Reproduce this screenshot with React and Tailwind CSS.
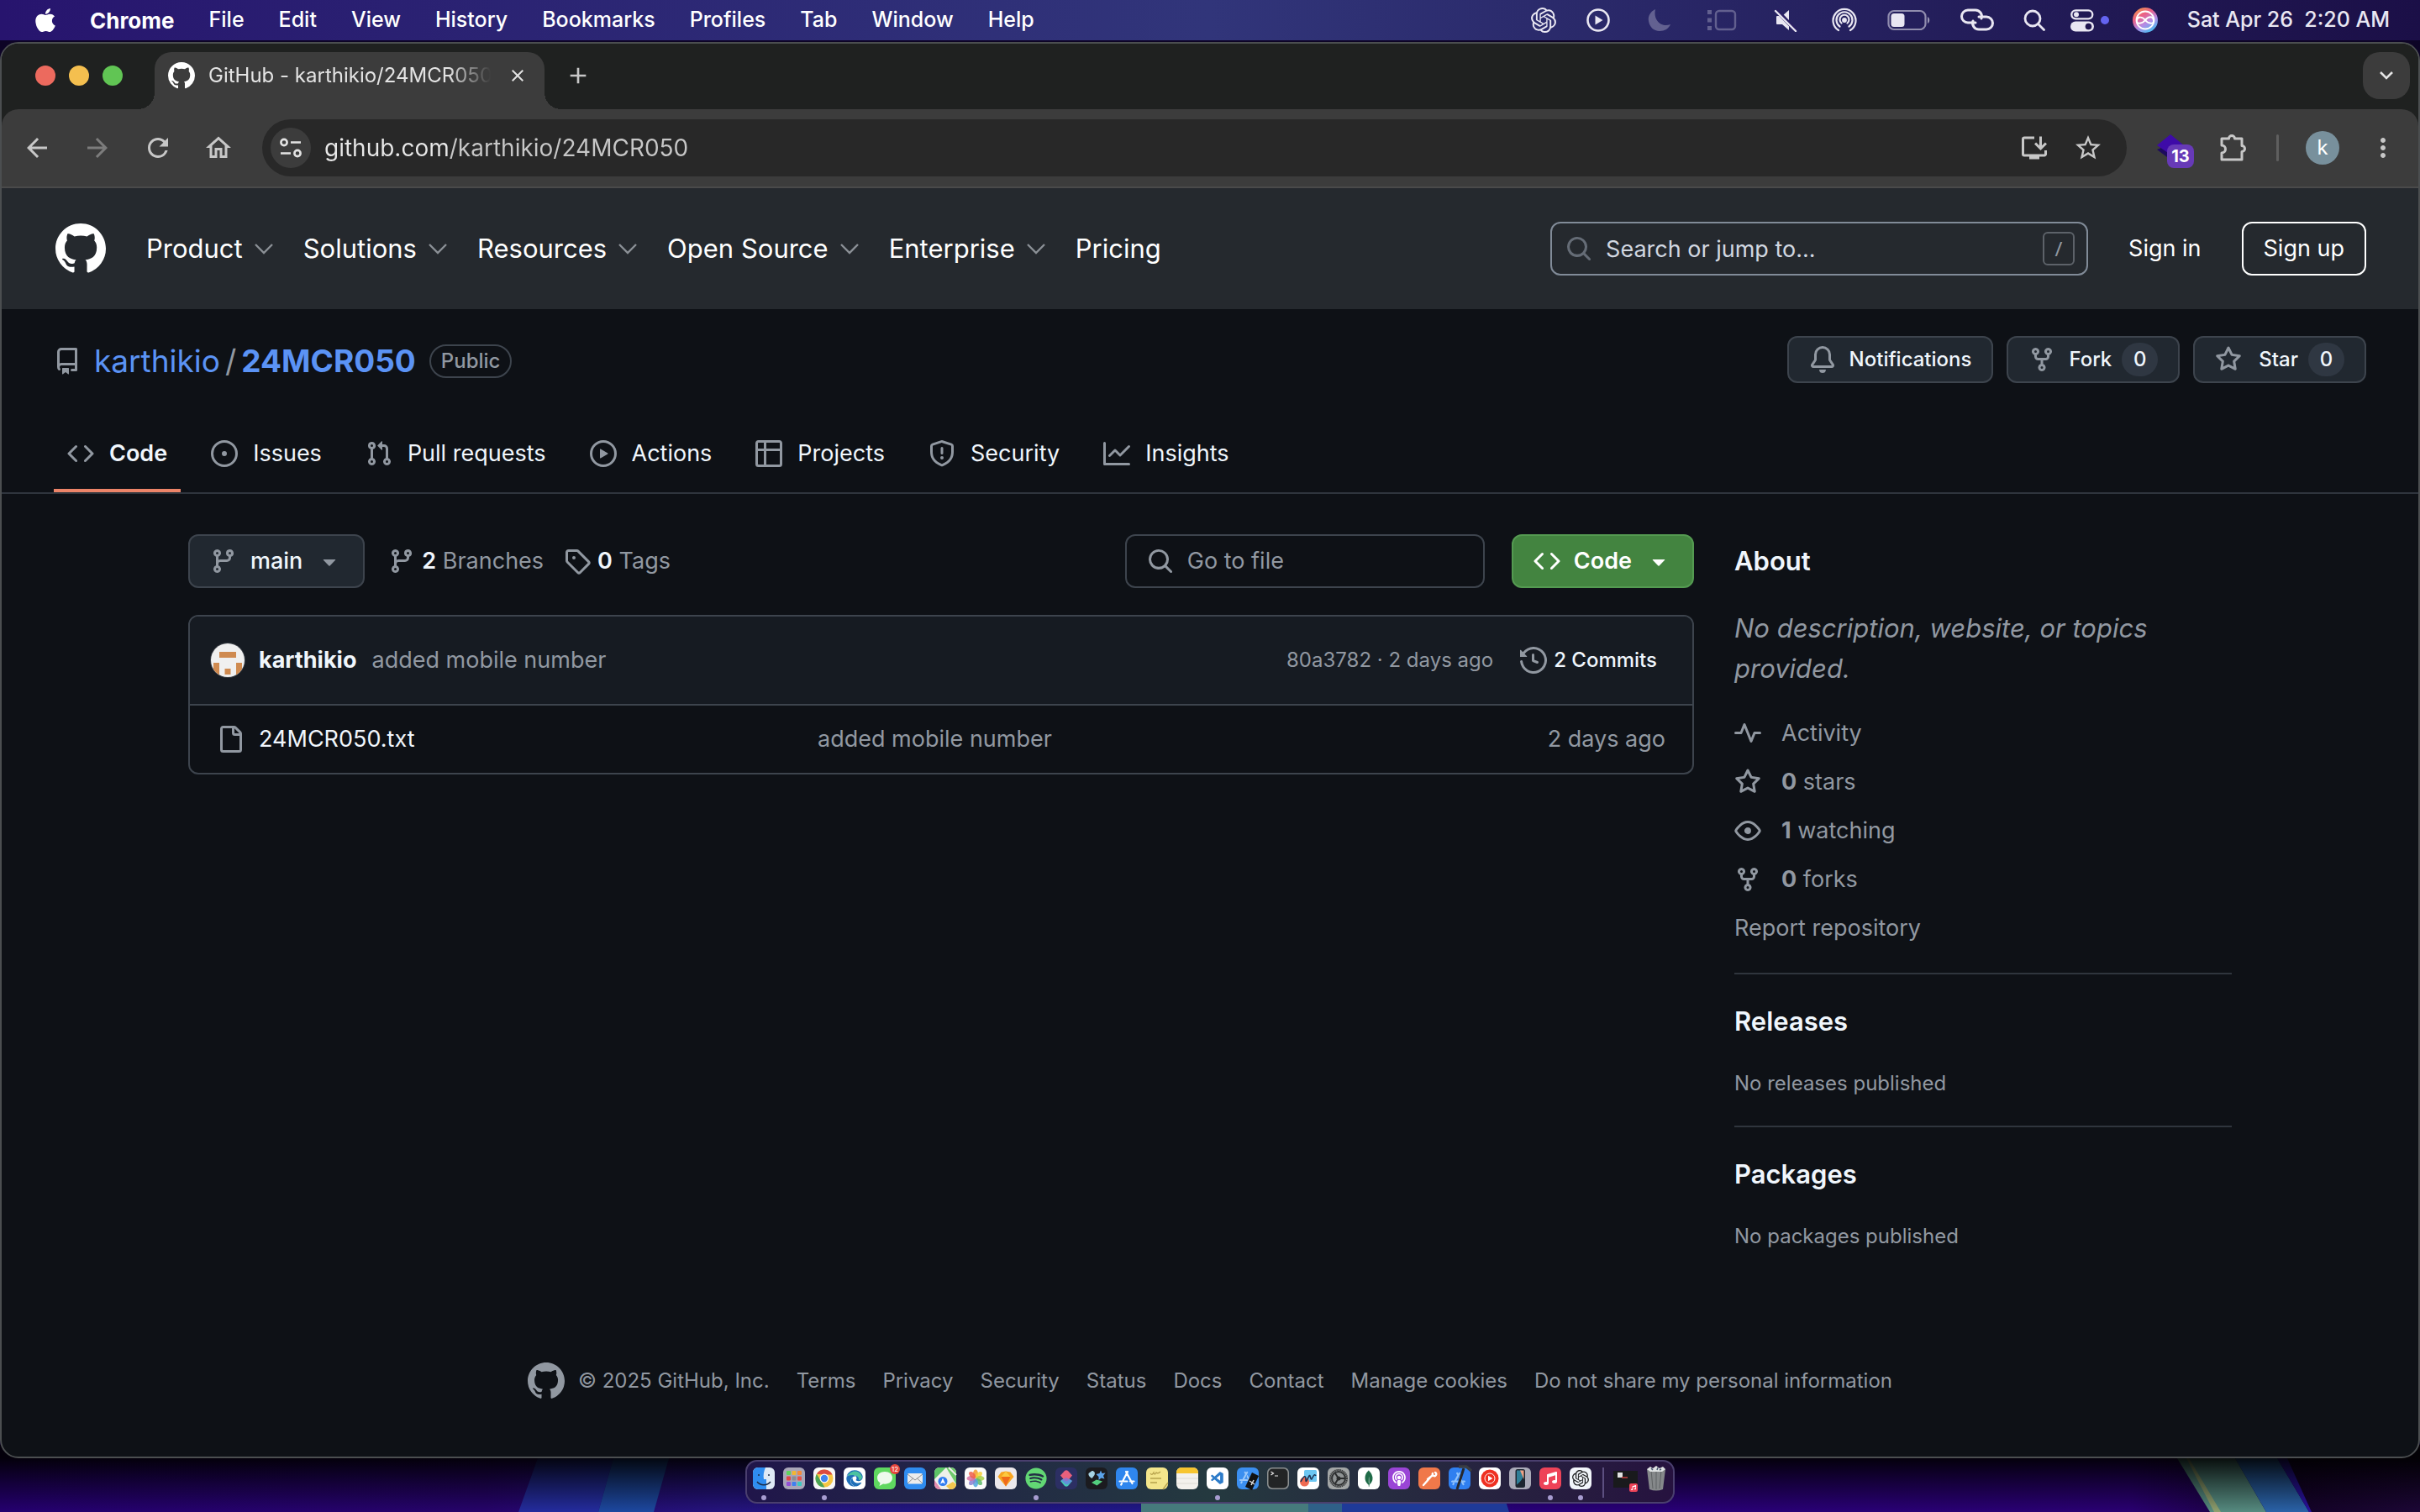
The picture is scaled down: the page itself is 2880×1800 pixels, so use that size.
import React from 'react';
import {
  FaApple,
  FaSpotify,
  FaEdge,
  FaMusic,
  FaPodcast,
} from 'react-icons/fa';
import {
  MdArrowBack,
  MdArrowForward,
  MdRefresh,
  MdOutlineHome,
  MdOutlineStarBorder,
  MdInstallDesktop,
  MdMoreVert,
  MdAdd,
  MdClose,
} from 'react-icons/md';
import { SiOpenai, SiMongodb, SiAppstore } from 'react-icons/si';
import { VscVscode } from 'react-icons/vsc';

const octicons = {
  mark: 'M8 0c4.42 0 8 3.58 8 8a8.013 8.013 0 0 1-5.45 7.59c-.4.08-.55-.17-.55-.38 0-.27.01-1.13.01-2.2 0-.75-.25-1.23-.54-1.48 1.78-.2 3.65-.88 3.65-3.95 0-.88-.31-1.59-.82-2.15.08-.2.36-1.02-.08-2.12 0 0-.67-.22-2.2.82-.64-.18-1.32-.27-2-.27-.68 0-1.36.09-2 .27-1.53-1.03-2.2-.82-2.2-.82-.44 1.1-.16 1.92-.08 2.12-.51.56-.82 1.28-.82 2.15 0 3.06 1.86 3.75 3.64 3.95-.23.2-.44.55-.51 1.07-.46.21-1.61.55-2.33-.66-.15-.24-.6-.83-1.23-.82-.67.01-.27.38.01.53.34.19.73.9.82 1.13.16.45.68 1.31 2.69.94 0 .67.01 1.3.01 1.49 0 .21-.15.45-.55.38A7.995 7.995 0 0 1 0 8c0-4.42 3.58-8 8-8Z',
  code: 'm11.28 3.22 4.25 4.25a.75.75 0 0 1 0 1.06l-4.25 4.25a.749.749 0 0 1-1.275-.326.749.749 0 0 1 .215-.734L13.94 8l-3.72-3.72a.749.749 0 0 1 .326-1.275.749.749 0 0 1 .734.215Zm-6.56 0a.751.751 0 0 1 1.042.018.751.751 0 0 1 .018 1.042L2.06 8l3.72 3.72a.749.749 0 0 1-.326 1.275.749.749 0 0 1-.734-.215L.47 8.53a.75.75 0 0 1 0-1.06Z',
  issue: 'M8 9.5a1.5 1.5 0 1 0 0-3 1.5 1.5 0 0 0 0 3ZM8 0a8 8 0 1 1 0 16A8 8 0 0 1 8 0ZM1.5 8a6.5 6.5 0 1 0 13 0 6.5 6.5 0 0 0-13 0Z',
  pull: 'M1.5 3.25a2.25 2.25 0 1 1 3 2.122v5.256a2.251 2.251 0 1 1-1.5 0V5.372A2.25 2.25 0 0 1 1.5 3.25Zm5.677-.177L9.573.677A.25.25 0 0 1 10 .854V2.5h1A2.5 2.5 0 0 1 13.5 5v5.628a2.251 2.251 0 1 1-1.5 0V5a1 1 0 0 0-1-1h-1v1.646a.25.25 0 0 1-.427.177L7.177 3.427a.25.25 0 0 1 0-.354ZM3.75 2.5a.75.75 0 1 0 0 1.5.75.75 0 0 0 0-1.5Zm0 9.5a.75.75 0 1 0 0 1.5.75.75 0 0 0 0-1.5Zm8.25.75a.75.75 0 1 0 1.5 0 .75.75 0 0 0-1.5 0Z',
  play: 'M8 0a8 8 0 1 1 0 16A8 8 0 0 1 8 0ZM1.5 8a6.5 6.5 0 1 0 13 0 6.5 6.5 0 0 0-13 0Zm4.879-2.773 4.264 2.559a.25.25 0 0 1 0 .428l-4.264 2.559A.25.25 0 0 1 6 10.559V5.442a.25.25 0 0 1 .379-.215Z',
  table: 'M0 1.75C0 .784.784 0 1.75 0h12.5C15.216 0 16 .784 16 1.75v12.5A1.75 1.75 0 0 1 14.25 16H1.75A1.75 1.75 0 0 1 0 14.25ZM6.5 6.5v8h7.75a.25.25 0 0 0 .25-.25V6.5Zm8-1.5V1.75a.25.25 0 0 0-.25-.25H6.5V5Zm-13 1.5v7.75c0 .138.112.25.25.25H5v-8ZM5 5V1.5H1.75a.25.25 0 0 0-.25.25V5Z',
  shield: 'M7.467.133a1.748 1.748 0 0 1 1.066 0l5.25 1.68A1.75 1.75 0 0 1 15 3.48V7c0 1.566-.32 3.182-1.303 4.682-.983 1.498-2.585 2.813-5.032 3.855a1.697 1.697 0 0 1-1.33 0c-2.447-1.042-4.049-2.357-5.032-3.855C1.32 10.182 1 8.566 1 7V3.48a1.75 1.75 0 0 1 1.217-1.667Zm.61 1.429a.25.25 0 0 0-.153 0l-5.25 1.68a.25.25 0 0 0-.174.238V7c0 1.358.275 2.666 1.057 3.86.784 1.194 2.121 2.34 4.366 3.297a.196.196 0 0 0 .154 0c2.245-.956 3.582-2.104 4.366-3.298C13.225 9.666 13.5 8.36 13.5 7V3.48a.251.251 0 0 0-.174-.237l-5.25-1.68ZM8.75 4.75v3a.75.75 0 0 1-1.5 0v-3a.75.75 0 0 1 1.5 0ZM9 10.5a1 1 0 1 1-2 0 1 1 0 0 1 2 0Z',
  graph: 'M1.5 1.75V13.5h13.75a.75.75 0 0 1 0 1.5H.75a.75.75 0 0 1-.75-.75V1.75a.75.75 0 0 1 1.5 0Zm14.28 2.53-5.25 5.25a.75.75 0 0 1-1.06 0L7 7.06 4.28 9.78a.751.751 0 0 1-1.042-.018.751.751 0 0 1-.018-1.042l3.25-3.25a.75.75 0 0 1 1.06 0L10 7.94l4.72-4.72a.751.751 0 0 1 1.042.018.751.751 0 0 1 .018 1.042Z',
  repo: 'M2 2.5A2.5 2.5 0 0 1 4.5 0h8.75a.75.75 0 0 1 .75.75v12.5a.75.75 0 0 1-.75.75h-2.5a.75.75 0 0 1 0-1.5h1.75v-2h-8a1 1 0 0 0-.714 1.7.75.75 0 1 1-1.072 1.05A2.495 2.495 0 0 1 2 11.5Zm10.5-1h-8a1 1 0 0 0-1 1v6.708A2.486 2.486 0 0 1 4.5 9h8ZM5 12.25a.25.25 0 0 1 .25-.25h3.5a.25.25 0 0 1 .25.25v3.25a.25.25 0 0 1-.4.2l-1.45-1.087a.249.249 0 0 0-.3 0L5.4 15.7a.25.25 0 0 1-.4-.2Z',
  bell: 'M8 16a2 2 0 0 0 1.985-1.75c.017-.137-.097-.25-.235-.25h-3.5c-.138 0-.252.113-.235.25A2 2 0 0 0 8 16ZM3 5a5 5 0 0 1 10 0v2.947c0 .05.015.098.042.139l1.703 2.555A1.519 1.519 0 0 1 13.482 13H2.518a1.516 1.516 0 0 1-1.263-2.36l1.703-2.554A.255.255 0 0 0 3 7.947Zm5-3.5A3.5 3.5 0 0 0 4.5 5v2.947c0 .346-.102.683-.294.97l-1.703 2.556a.017.017 0 0 0-.003.01l.001.006c0 .002.002.004.004.006l.006.004.007.001h10.964l.007-.001.006-.004.004-.006.001-.007a.017.017 0 0 0-.003-.01l-1.703-2.554a1.745 1.745 0 0 1-.294-.97V5A3.5 3.5 0 0 0 8 1.5Z',
  fork: 'M5 5.372v.878c0 .414.336.75.75.75h4.5a.75.75 0 0 0 .75-.75v-.878a2.25 2.25 0 1 1 1.5 0v.878a2.25 2.25 0 0 1-2.25 2.25h-1.5v2.128a2.251 2.251 0 1 1-1.5 0V8.5h-1.5A2.25 2.25 0 0 1 3.5 6.25v-.878a2.25 2.25 0 1 1 1.5 0ZM5 3.25a.75.75 0 1 0-1.5 0 .75.75 0 0 0 1.5 0Zm6.75.75a.75.75 0 1 0 0-1.5.75.75 0 0 0 0 1.5Zm-3 8.75a.75.75 0 1 0-1.5 0 .75.75 0 0 0 1.5 0Z',
  star: 'M8 .25a.75.75 0 0 1 .673.418l1.882 3.815 4.21.612a.75.75 0 0 1 .416 1.279l-3.046 2.97.719 4.192a.751.751 0 0 1-1.088.791L8 12.347l-3.766 1.98a.75.75 0 0 1-1.088-.79l.72-4.194L.818 6.374a.75.75 0 0 1 .416-1.28l4.21-.611L7.327.668A.75.75 0 0 1 8 .25Zm0 2.445L6.615 5.5a.75.75 0 0 1-.564.41l-3.097.45 2.24 2.184a.75.75 0 0 1 .216.664l-.528 3.084 2.769-1.456a.75.75 0 0 1 .698 0l2.77 1.456-.53-3.084a.75.75 0 0 1 .216-.664l2.24-2.183-3.096-.45a.75.75 0 0 1-.564-.41L8 2.694Z',
  branch: 'M9.5 3.25a2.25 2.25 0 1 1 3 2.122V6A2.5 2.5 0 0 1 10 8.5H6a1 1 0 0 0-1 1v1.128a2.251 2.251 0 1 1-1.5 0V5.372a2.25 2.25 0 1 1 1.5 0v1.836A2.493 2.493 0 0 1 6 7h4a1 1 0 0 0 1-1v-.628A2.25 2.25 0 0 1 9.5 3.25Zm-6 0a.75.75 0 1 0 1.5 0 .75.75 0 0 0-1.5 0Zm8.25-.75a.75.75 0 1 0 0 1.5.75.75 0 0 0 0-1.5ZM4.25 12a.75.75 0 1 0 0 1.5.75.75 0 0 0 0-1.5Z',
  tag: 'M1 7.775V2.75C1 1.784 1.784 1 2.75 1h5.025c.464 0 .91.184 1.238.513l6.25 6.25a1.75 1.75 0 0 1 0 2.474l-5.026 5.026a1.75 1.75 0 0 1-2.474 0l-6.25-6.25A1.752 1.752 0 0 1 1 7.775Zm1.5 0c0 .066.026.13.073.177l6.25 6.25a.25.25 0 0 0 .354 0l5.025-5.025a.25.25 0 0 0 0-.354l-6.25-6.25a.25.25 0 0 0-.177-.073H2.75a.25.25 0 0 0-.25.25ZM6 5a1 1 0 1 1 0 2 1 1 0 0 1 0-2Z',
  search: 'M10.68 11.74a6 6 0 0 1-7.922-8.982 6 6 0 0 1 8.982 7.922l3.04 3.04a.749.749 0 0 1-.326 1.275.749.749 0 0 1-.734-.215ZM11.5 7a4.499 4.499 0 1 0-8.997 0A4.499 4.499 0 0 0 11.5 7Z',
  history: 'm.427 1.927 1.215 1.215a8.002 8.002 0 1 1-1.6 5.685.75.75 0 1 1 1.493-.154 6.5 6.5 0 1 0 1.18-4.458l1.358 1.358A.25.25 0 0 1 3.896 6H.25A.25.25 0 0 1 0 5.75V2.104a.25.25 0 0 1 .427-.177ZM7.75 4a.75.75 0 0 1 .75.75v2.992l2.028.812a.75.75 0 0 1-.557 1.392l-2.5-1A.751.751 0 0 1 7 8.25v-3.5A.75.75 0 0 1 7.75 4Z',
  file: 'M2 1.75C2 .784 2.784 0 3.75 0h6.586c.464 0 .909.184 1.237.513l2.914 2.914c.329.328.513.773.513 1.237v9.586A1.75 1.75 0 0 1 13.25 16h-9.5A1.75 1.75 0 0 1 2 14.25Zm1.75-.25a.25.25 0 0 0-.25.25v12.5c0 .138.112.25.25.25h9.5a.25.25 0 0 0 .25-.25V6h-2.75A1.75 1.75 0 0 1 9 4.25V1.5Zm6.75.062V4.25c0 .138.112.25.25.25h2.688l-.011-.013-2.914-2.914-.013-.011Z',
  pulse: 'M6 2c.306 0 .582.187.696.471L10 10.731l1.304-3.26A.751.751 0 0 1 12 7h3.25a.75.75 0 0 1 0 1.5h-2.742l-1.812 4.528a.751.751 0 0 1-1.392 0L6 4.77 4.696 8.03A.75.75 0 0 1 4 8.5H.75a.75.75 0 0 1 0-1.5h2.742l1.812-4.529A.751.751 0 0 1 6 2Z',
  eye: 'M8 2c1.981 0 3.671.992 4.933 2.078 1.27 1.091 2.187 2.345 2.637 3.023a1.62 1.62 0 0 1 0 1.798c-.45.678-1.367 1.932-2.637 3.023C11.67 13.008 9.981 14 8 14c-1.981 0-3.671-.992-4.933-2.078C1.797 10.83.88 9.576.43 8.898a1.62 1.62 0 0 1 0-1.798c.45-.677 1.367-1.931 2.637-3.022C4.33 2.992 6.019 2 8 2ZM1.679 7.932a.12.12 0 0 0 0 .136c.411.622 1.241 1.75 2.366 2.717C5.176 11.758 6.527 12.5 8 12.5c1.473 0 2.825-.742 3.955-1.715 1.124-.967 1.954-2.096 2.366-2.717a.12.12 0 0 0 0-.136c-.412-.621-1.242-1.75-2.366-2.717C10.824 4.242 9.473 3.5 8 3.5c-1.473 0-2.825.742-3.955 1.715-1.124.967-1.954 2.096-2.366 2.717ZM8 10a2 2 0 1 1-.001-3.999A2 2 0 0 1 8 10Z',
  caret: 'm4.427 7.427 3.396 3.396a.25.25 0 0 0 .354 0l3.396-3.396A.25.25 0 0 0 11.396 7H4.604a.25.25 0 0 0-.177.427Z',
};

const Octicon = ({ name, className = 'size-8 text-[#9198a1]' }) => (
  <svg viewBox="0 0 16 16" fill="currentColor" className={`shrink-0 ${className}`} aria-hidden="true">
    <path d={octicons[name]} />
  </svg>
);

const Wallpaper = () => (
  <svg
    className="absolute inset-x-0 bottom-0 h-20 w-full"
    viewBox="0 0 2880 80"
    preserveAspectRatio="none"
    aria-hidden="true"
  >
    <defs>
      <linearGradient id="wall" x1="0" x2="1" y1="0" y2="0">
        <stop offset="0" stopColor="#250070" />
        <stop offset="0.2" stopColor="#26036b" />
        <stop offset="0.3" stopColor="#25147f" />
        <stop offset="0.47" stopColor="#21188a" />
        <stop offset="0.63" stopColor="#29007a" />
        <stop offset="0.88" stopColor="#2a0073" />
        <stop offset="0.95" stopColor="#140228" />
        <stop offset="1" stopColor="#1c0636" />
      </linearGradient>
      <linearGradient id="shade" x1="0" x2="0" y1="0" y2="1">
        <stop offset="0.2" stopColor="#000" stopOpacity="0.9" />
        <stop offset="0.6" stopColor="#000" stopOpacity="0.45" />
        <stop offset="1" stopColor="#000" stopOpacity="0" />
      </linearGradient>
    </defs>
    <rect width="2880" height="80" fill="url(#wall)" />
    <path d="M640 16h90l-18 64h-95z" fill="#242c9e" />
    <path d="M730 16h66l-18 64h-66z" fill="#1d48a0" />
    <path d="M2591 16h69l37 64h-67z" fill="#568b80" />
    <path d="M2602 16h3l38 64h-8z" fill="#8fa06f" />
    <path d="M2660 16h50l38 64h-51z" fill="#2a62a8" />
    <path d="M2710 16h12l29 64h-3z" fill="#2a12a0" />
    <rect width="2880" height="80" fill="url(#shade)" />
    <rect x="1358" y="64" width="199" height="16" fill="#467a7c" />
    <rect x="1557" y="64" width="40" height="16" fill="#2f6088" />
    <path d="M1597 64h194l5 16h-199z" fill="#1f3a98" />
  </svg>
);

/* ---------- macOS menu bar ---------- */

const menus = ['File', 'Edit', 'View', 'History', 'Bookmarks', 'Profiles', 'Tab', 'Window', 'Help'];

const StatusIcon = ({ label, width, children }) => (
  <button type="button" aria-label={label} className={`flex items-center justify-center ${width}`}>
    {children}
  </button>
);

const MenuBar = () => (
  <header className="relative flex h-12 items-center justify-between bg-linear-to-r from-[#27146e] via-[#31357a] to-[#1b0f47] pr-9 pl-[38px] text-[25px] text-white">
    <nav className="flex items-center gap-[41px] font-medium" aria-label="Menu bar">
      <button type="button" aria-label="Apple" className="-mr-1">
        <FaApple className="size-8" />
      </button>
      <button type="button" className="text-[26px] font-bold">Chrome</button>
      {menus.map((m) => (
        <button type="button" key={m}>{m}</button>
      ))}
    </nav>
    <div className="flex items-center gap-4 text-[#e9e7f2]">
      <StatusIcon label="ChatGPT" width="w-[44px]">
        <SiOpenai className="size-[30px]" />
      </StatusIcon>
      <StatusIcon label="Now playing" width="w-[54px]">
        <svg viewBox="0 0 28 28" className="size-7">
          <circle cx="14" cy="14" r="12.5" fill="none" stroke="currentColor" strokeWidth="2.6" />
          <path d="M10.5 8.5v11l9-5.5z" fill="currentColor" />
        </svg>
      </StatusIcon>
      <StatusIcon label="Focus" width="w-[60px]">
        <svg viewBox="0 0 28 28" className="size-7 opacity-30">
          <path d="M9 1C3 4 0 9 1 15c1 7 6 12 13 12 6 0 11-3 13-8C17 23 6 15 9 1z" fill="currentColor" />
        </svg>
      </StatusIcon>
      <StatusIcon label="Stage Manager" width="w-[56px]">
        <svg viewBox="0 0 36 26" className="h-[26px] w-9 opacity-30">
          <rect x="11" y="2" width="23" height="22" rx="4" fill="none" stroke="currentColor" strokeWidth="2.4" />
          <path d="M1 1h5v5H1zM1 10.5h5v5H1zM1 20h5v5H1z" fill="currentColor" />
        </svg>
      </StatusIcon>
      <StatusIcon label="Muted" width="w-[64px]">
        <svg viewBox="0 0 28 28" className="size-7">
          <path d="M18 2v24l-8-7H4a1 1 0 0 1-1-1v-8a1 1 0 0 1 1-1h6z" fill="currentColor" />
          <path d="M3 2l24 25" stroke="#2a1f63" strokeWidth="5" />
          <path d="M2 3l24 24" stroke="currentColor" strokeWidth="2.4" strokeLinecap="round" />
        </svg>
      </StatusIcon>
      <StatusIcon label="AirDrop" width="w-[44px]">
        <svg viewBox="0 0 30 30" className="size-[30px]" fill="none" stroke="currentColor" strokeWidth="2.2" strokeLinecap="round">
          <path d="M8 27A13.5 13.5 0 1 1 22 27" />
          <path d="M9.5 22.5A9.5 9.5 0 1 1 20.5 22.5" />
          <path d="M11.5 18.5A5.5 5.5 0 1 1 18.5 18.5" />
          <circle cx="15" cy="15" r="1.8" fill="currentColor" />
        </svg>
      </StatusIcon>
      <StatusIcon label="Battery" width="w-[78px]">
        <svg viewBox="0 0 52 26" className="h-[26px] w-[52px]">
          <rect x="1.5" y="2" width="44" height="22" rx="6.5" fill="none" stroke="currentColor" strokeOpacity="0.55" strokeWidth="2.2" />
          <rect x="4.5" y="5" width="16" height="16" rx="3.5" fill="currentColor" />
          <path d="M48 9c3 1.500 3 6.500 0 8z" fill="currentColor" fillOpacity="0.6" />
        </svg>
      </StatusIcon>
      <StatusIcon label="Hotspot" width="w-[52px]">
        <svg viewBox="0 0 44 28" className="h-7 w-11" fill="none" stroke="currentColor" strokeWidth="3" strokeLinecap="round">
          <path d="M20 17h-9a7.5 7.5 0 0 1 0-15h9a7.5 7.5 0 0 1 7 10" />
          <path d="M24 10h9a7.5 7.5 0 0 1 0 15h-9a7.5 7.5 0 0 1-7-10" />
        </svg>
      </StatusIcon>
      <StatusIcon label="Spotlight" width="w-[52px]">
        <svg viewBox="0 0 26 26" className="size-[26px]" fill="none" stroke="currentColor" strokeWidth="2.8" strokeLinecap="round">
          <circle cx="11" cy="11" r="9" />
          <path d="M18 18l6.5 6.5" />
        </svg>
      </StatusIcon>
      <StatusIcon label="Control Centre" width="w-[48px]">
        <svg viewBox="0 0 48 28" className="h-7 w-12">
          <rect x="2.3" y="2.3" width="25" height="10" rx="5" fill="none" stroke="currentColor" strokeWidth="2.3" />
          <circle cx="8" cy="7.3" r="3" fill="currentColor" />
          <rect x="1" y="15.5" width="28" height="12" rx="6" fill="currentColor" />
          <circle cx="22.5" cy="21.5" r="3.8" fill="#1f154f" />
          <circle cx="42" cy="14" r="5" fill="#6464f0" />
        </svg>
      </StatusIcon>
      <StatusIcon label="Siri" width="w-[52px]">
        <svg viewBox="0 0 30 30" className="size-[30px]">
          <defs>
            <linearGradient id="siri" x1="0" x2="0.6" y1="0" y2="1">
              <stop offset="0" stopColor="#f5a53c" />
              <stop offset="0.4" stopColor="#ec5f86" />
              <stop offset="0.7" stopColor="#b58be6" />
              <stop offset="1" stopColor="#52b7f0" />
            </linearGradient>
          </defs>
          <circle cx="15" cy="15" r="15" fill="url(#siri)" />
          <path d="M15 15c-3-4-9-5-10 0s6 5 10 0 9-5 10 0-6 5-10 0z" fill="none" stroke="#fff" strokeWidth="2" />
          <circle cx="15" cy="15" r="10.5" fill="none" stroke="#fff" strokeWidth="1.8" />
        </svg>
      </StatusIcon>
      <time className="ml-2 font-medium whitespace-pre">Sat Apr 26  2:20 AM</time>
    </div>
  </header>
);

/* ---------- browser chrome ---------- */

const TabStrip = () => (
  <div className="flex h-[78px] items-end bg-[#1f2120] pr-[10px] pl-10">
    <div className="flex items-center gap-4 pb-7">
      <button type="button" aria-label="Close window" className="size-6 rounded-full bg-[#ec6a5e]" />
      <button type="button" aria-label="Minimise window" className="size-6 rounded-full bg-[#f4bf4f]" />
      <button type="button" aria-label="Zoom window" className="size-6 rounded-full bg-[#61c554]" />
    </div>
    <div className="ml-[18px] size-5 bg-[radial-gradient(circle_at_0_0,transparent_20px,#3c3c3c_20px)]" />
    <div className="flex h-[68px] w-[464px] items-center rounded-t-[20px] bg-[#3c3c3c] px-4 pb-3">
      <Octicon name="mark" className="size-8 text-white" />
      <span className="ml-4 min-w-0 flex-1 mask-r-from-85% text-[24px] whitespace-nowrap text-[#e3e3e3]">
        GitHub - karthikio/24MCR050
      </span>
      <button type="button" aria-label="Close tab" className="ml-4 flex size-8 items-center justify-center">
        <MdClose className="size-6 text-[#e3e3e3]" />
      </button>
    </div>
    <div className="size-5 bg-[radial-gradient(circle_at_100%_0,transparent_20px,#3c3c3c_20px)]" />
    <button type="button" aria-label="New tab" className="mb-6 ml-1">
      <MdAdd className="size-8 text-[#c7c7c7]" />
    </button>
    <button
      type="button"
      aria-label="Search tabs"
      className="mb-3 ml-auto flex size-14 items-center justify-center rounded-[20px] bg-[#3c3c3c]"
    >
      <svg viewBox="0 0 16 10" className="h-[10px] w-4" fill="none" stroke="#e3e3e3" strokeWidth="2.6">
        <path d="M1 1l7 7 7-7" />
      </svg>
    </button>
  </div>
);

const Toolbar = () => (
  <div className="bg-[#1f2120]">
    <div className="flex h-[94px] items-center rounded-t-[20px] border-b-2 border-[#4a4a4a] bg-[#3c3c3c] px-6 text-[#c7c7c7]">
      <div className="flex items-center gap-9">
        <button type="button" aria-label="Back">
          <MdArrowBack className="size-9" />
        </button>
        <button type="button" aria-label="Forward" className="text-[#7c7c7c]">
          <MdArrowForward className="size-9" />
        </button>
        <button type="button" aria-label="Reload">
          <MdRefresh className="size-9" />
        </button>
        <button type="button" aria-label="Home">
          <MdOutlineHome className="size-9" />
        </button>
      </div>
      <div className="ml-[34px] flex h-[68px] flex-1 items-center rounded-full bg-[#282828] pr-7 pl-[10px]">
        <button
          type="button"
          aria-label="View site information"
          className="flex size-12 items-center justify-center rounded-full bg-[#3c3c3c]"
        >
          <svg viewBox="0 0 26 24" className="h-6 w-[26px]" fill="none" stroke="#e3e3e3" strokeWidth="2.6">
            <circle cx="5" cy="5.5" r="3.6" />
            <path d="M13 5.5h12M1 18.500h12" />
            <circle cx="21" cy="18.5" r="3.6" />
          </svg>
        </button>
        <input
          type="text"
          aria-label="Address"
          defaultValue="github.com/karthikio/24MCR050"
          className="ml-4 min-w-0 flex-1 bg-[linear-gradient(90deg,#e8e8e8_150px,#c7c7c7_150px)] bg-clip-text text-[28px] text-transparent outline-none"
        />
        <div className="flex items-center gap-7">
          <button type="button" aria-label="Install app">
            <MdInstallDesktop className="size-9" />
          </button>
          <button type="button" aria-label="Bookmark this page">
            <MdOutlineStarBorder className="size-9" />
          </button>
        </div>
      </div>
      <button type="button" aria-label="Extension with 13 notifications" className="relative ml-8 size-10">
        <svg viewBox="0 0 40 40" className="size-10">
          <path d="M4 22l16-6 16 6-16 12z" fill="#1d0a5e" />
          <path d="M20 4l16 13-16 11L4 17z" fill="#3e0ba8" />
        </svg>
        <span className="absolute top-4 left-4 flex h-7 w-8 items-center justify-center rounded-lg bg-[#673ab7] text-[20px] font-bold text-white">
          13
        </span>
      </button>
      <button type="button" aria-label="Extensions" className="ml-9">
        <svg viewBox="0 0 36 36" className="size-9" fill="none" stroke="currentColor" strokeWidth="3" strokeLinejoin="round">
          <path d="M5 7h8.5a3.5 3.5 0 0 1 7 0H29v8.5a3.5 3.5 0 0 1 0 7V32H5v-8a4.5 4.5 0 0 0 0-9z" />
        </svg>
      </button>
      <span className="ml-[34px] h-8 w-[3px] rounded-full bg-[#5f5f5f]" />
      <button
        type="button"
        aria-label="Profile k"
        className="ml-8 flex size-10 items-center justify-center rounded-full bg-[#78909c] text-[24px] text-white"
      >
        k
      </button>
      <button type="button" aria-label="Chrome menu" className="ml-[34px]">
        <MdMoreVert className="size-9" />
      </button>
    </div>
  </div>
);

/* ---------- github ---------- */

const navItems = [
  { label: 'Product', menu: true },
  { label: 'Solutions', menu: true },
  { label: 'Resources', menu: true },
  { label: 'Open Source', menu: true },
  { label: 'Enterprise', menu: true },
  { label: 'Pricing', menu: false },
];

const SiteHeader = () => (
  <header className="flex h-36 items-center bg-[#25292e] pr-[62px] pl-16 text-white">
    <a href="#home" aria-label="GitHub">
      <Octicon name="mark" className="size-15 text-white" />
    </a>
    <nav className="ml-12 flex items-center gap-9 text-[31px]" aria-label="Global">
      {navItems.map((item) =>
        item.menu ? (
          <button type="button" key={item.label} className="flex items-center gap-[14px]">
            {item.label}
            <svg viewBox="0 0 22 13" className="h-[13px] w-[22px]" fill="none" stroke="#8b9096" strokeWidth="2.4">
              <path d="M1 1l10 10L21 1" />
            </svg>
          </button>
        ) : (
          <a href="#pricing" key={item.label}>{item.label}</a>
        )
      )}
    </nav>
    <div className="ml-auto flex items-center gap-12 text-[27px]">
      <button
        type="button"
        className="flex h-16 w-[640px] items-center rounded-xl border-2 border-[#818b98] pr-[14px] pl-4 text-[#d1d7e0]"
      >
        <Octicon name="search" className="size-8 text-[#656c76]" />
        <span className="ml-4 flex-1 pt-0.5 text-left">Search or jump to...</span>
        <kbd className="flex h-10 w-[38px] items-center justify-center rounded-md border-2 border-[#5d6269] font-sans text-[24px] text-[#9198a1]">
          /
        </kbd>
      </button>
      <a href="#signin">Sign in</a>
      <a href="#signup" className="flex h-16 items-center rounded-xl border-2 border-white px-6">
        Sign up
      </a>
    </div>
  </header>
);

const actionClass =
  'flex h-14 items-center rounded-xl border-2 border-[#3d444d] bg-[#212830] px-6 text-[24px] font-medium text-[#f0f6fc]';

const Counter = ({ children }) => (
  <span className="ml-3 flex h-10 w-[43px] items-center justify-center rounded-full bg-[#2f3742]">{children}</span>
);

const RepoTitle = () => (
  <div className="flex h-14 items-center justify-between px-[62px]">
    <div className="flex items-center pt-1">
      <Octicon name="repo" />
      <h1 className="ml-4 flex items-center gap-1.5 text-[37px] text-[#9198a1]">
        <a href="#karthikio" className="text-[#5b93f5]">karthikio</a>
        <span>/</span>
        <a href="#24MCR050" className="font-bold text-[#5b93f5]">24MCR050</a>
      </h1>
      <span className="ml-4 flex h-10 items-center rounded-full border-2 border-[#3d444d] px-3 text-[24px] font-medium text-[#9198a1]">
        Public
      </span>
    </div>
    <div className="flex items-center gap-4">
      <a href="#notifications" className={actionClass}>
        <Octicon name="bell" className="mr-4 size-8 text-[#9198a1]" />
        Notifications
      </a>
      <a href="#fork" className={actionClass}>
        <Octicon name="fork" className="mr-4 size-8 text-[#9198a1]" />
        Fork
        <Counter>0</Counter>
      </a>
      <a href="#star" className={actionClass}>
        <Octicon name="star" className="mr-5 size-8 text-[#9198a1]" />
        Star
        <Counter>0</Counter>
      </a>
    </div>
  </div>
);

const tabs = [
  { label: 'Code', icon: 'code' },
  { label: 'Issues', icon: 'issue' },
  { label: 'Pull requests', icon: 'pull' },
  { label: 'Actions', icon: 'play' },
  { label: 'Projects', icon: 'table' },
  { label: 'Security', icon: 'shield' },
  { label: 'Insights', icon: 'graph' },
];

const RepoTabs = () => (
  <nav className="mt-9 flex h-24 gap-5 border-b-2 border-[#2f353d] px-[62px] text-[27px]" aria-label="Repository">
    {tabs.map((t, i) => (
      <a
        href={`#${t.icon}`}
        key={t.label}
        className={`flex items-center gap-[18px] border-b-4 px-4 pt-1.5 text-[#f0f6fc] ${
          i === 0 ? 'border-[#ec8468] font-semibold' : 'border-transparent'
        }`}
      >
        <Octicon name={t.icon} />
        {t.label}
      </a>
    ))}
  </nav>
);

const Identicon = () => (
  <svg viewBox="0 0 42 42" className="size-[42px]" aria-hidden="true">
    <defs>
      <clipPath id="avatar">
        <circle cx="21" cy="21" r="20" />
      </clipPath>
    </defs>
    <circle cx="21" cy="21" r="21" fill="#3c4148" />
    <g clipPath="url(#avatar)">
      <rect width="42" height="42" fill="#f0f0f0" />
      <path d="M11 11h20v7H11zM4 24h7v18H4zM31 24h7v18h-7zM17.5 31h7v7h-7z" fill="#cf8a50" />
    </g>
  </svg>
);

const FileBar = () => (
  <div className="flex h-16 items-center text-[27px] text-[#9198a1]">
    <button
      type="button"
      className="flex h-16 items-center rounded-xl border-2 border-[#3d444d] bg-[#212830] px-6 font-medium text-[#f0f6fc]"
    >
      <Octicon name="branch" className="mr-4 size-8 text-[#9198a1]" />
      main
      <Octicon name="caret" className="ml-4 size-8 text-[#9198a1]" />
    </button>
    <a href="#branches" className="ml-7 flex items-center">
      <Octicon name="branch" />
      <span className="ml-2">
        <strong className="font-semibold text-[#f0f6fc]">2</strong> Branches
      </span>
    </a>
    <a href="#tags" className="ml-6 flex items-center">
      <Octicon name="tag" />
      <span className="ml-2">
        <strong className="font-semibold text-[#f0f6fc]">0</strong> Tags
      </span>
    </a>
    <label className="ml-auto flex h-16 w-[428px] items-center rounded-xl border-2 border-[#3d444d] px-6">
      <Octicon name="search" />
      <input
        type="text"
        aria-label="Go to file"
        placeholder="Go to file"
        className="ml-4 w-full min-w-0 outline-none placeholder:text-[#9198a1]"
      />
    </label>
    <button
      type="button"
      className="ml-8 flex h-16 items-center rounded-xl border-2 border-[#549a51] bg-[#438440] px-6 font-semibold text-white"
    >
      <Octicon name="code" className="mr-4 size-8 text-white" />
      Code
      <Octicon name="caret" className="ml-4 size-8 text-white" />
    </button>
  </div>
);

const FileList = () => (
  <div className="mt-8 overflow-hidden rounded-xl border-2 border-[#3d444d] text-[27px] text-[#9198a1]">
    <div className="flex h-[106px] items-center border-b-2 border-[#3d444d] bg-[#161b22] pr-[42px] pl-6">
      <Identicon />
      <a href="#karthikio" className="ml-4 font-bold text-[#f0f6fc]">karthikio</a>
      <a href="#commit" className="ml-[18px]">added mobile number</a>
      <span className="ml-auto text-[24px]">
        <a href="#80a3782">80a3782</a> · 2 days ago
      </span>
      <a href="#commits" className="ml-8 flex items-center text-[24px] font-medium text-[#f0f6fc]">
        <Octicon name="history" className="mr-2 size-8 text-[#9198a1]" />
        2 Commits
      </a>
    </div>
    <table className="w-full table-fixed">
      <tbody>
        <tr className="h-20">
          <td className="w-[747px] pl-8">
            <a href="#file" className="flex items-center gap-[18px] text-[#f0f6fc]">
              <Octicon name="file" />
              24MCR050.txt
            </a>
          </td>
          <td>added mobile number</td>
          <td className="pr-8 text-right">2 days ago</td>
        </tr>
      </tbody>
    </table>
  </div>
);

const stats = [
  { icon: 'pulse', label: 'Activity' },
  { icon: 'star', count: '0', label: 'stars' },
  { icon: 'eye', count: '1', label: 'watching' },
  { icon: 'fork', count: '0', label: 'forks' },
];

const Sidebar = () => (
  <aside className="w-[592px] shrink-0 text-[27px] text-[#9198a1]">
    <h2 className="flex h-16 items-center text-[31px] font-semibold text-[#f0f6fc]">About</h2>
    <p className="mt-6 text-[31px] leading-[48px] italic">No description, website, or topics provided.</p>
    <ul className="mt-8">
      {stats.map((s) => (
        <li key={s.label} className="mb-4 h-[42px]">
          <a href={`#${s.label}`} className="flex h-full items-center gap-6">
            <Octicon name={s.icon} />
            <span>
              {s.count && <strong className="font-bold">{s.count}</strong>} {s.label}
            </span>
          </a>
        </li>
      ))}
    </ul>
    <a href="#report" className="flex h-[42px] items-center">Report repository</a>
    <section className="mt-8 border-t-2 border-[#2f353d] pt-8">
      <h2 className="text-[31px] leading-[48px] font-semibold text-[#f0f6fc]">Releases</h2>
      <p className="mt-8 text-[24px] leading-9">No releases published</p>
    </section>
    <section className="mt-8 border-t-2 border-[#2f353d] pt-8">
      <h2 className="text-[31px] leading-[48px] font-semibold text-[#f0f6fc]">Packages</h2>
      <p className="mt-8 text-[24px] leading-9">No packages published</p>
    </section>
  </aside>
);

const footerLinks = [
  'Terms',
  'Privacy',
  'Security',
  'Status',
  'Docs',
  'Contact',
  'Manage cookies',
  'Do not share my personal information',
];

const SiteFooter = () => (
  <footer className="mt-auto flex items-center justify-center gap-8 pb-[68px] text-[24px] text-[#9198a1]">
    <div className="flex items-center gap-4">
      <Octicon name="mark" className="size-11 text-[#9198a1]" />
      <span>© 2025 GitHub, Inc.</span>
    </div>
    {footerLinks.map((l) => (
      <a href="#footer" key={l}>{l}</a>
    ))}
  </footer>
);

/* ---------- dock ---------- */

const petals = [
  '#f39a2c', '#f6cf3a', '#a8cf45', '#5dba6a', '#4fa6dd', '#8b7fd0', '#d971a5', '#ef5f4a',
];

const tiles = [
  '#5fd35c', '#f2b632', '#f58a3c', '#e24444', '#8c8c94', '#e8524a', '#9450d6', '#3f7ff0', '#3cc9c0',
];

const dockApps = [
  {
    name: 'Finder',
    running: true,
    bg: '#dfe9f5',
    art: (
      <>
        <path d="M6 0h9c-2 5-3 9-2 14h3v12H6a6 6 0 0 1-6-6V6a6 6 0 0 1 6-6z" fill="#2f8df0" />
        <path d="M7 8v2M19 8v2M5 17c4 5 12 5 16 0" stroke="#1b2a44" strokeWidth="1.5" fill="none" />
      </>
    ),
  },
  {
    name: 'Launchpad',
    bg: '#a9a6b8',
    art: tiles.map((c, i) => (
      <rect key={c} x={4 + (i % 3) * 6.5} y={4 + Math.floor(i / 3) * 6.5} width="5" height="5" rx="1" fill={c} />
    )),
  },
  {
    name: 'Chrome',
    running: true,
    bg: '#f7f7f7',
    art: (
      <>
        <circle cx="13" cy="13" r="10.5" fill="#f6c643" />
        <path d="M3.9 7.8A10.5 10.5 0 0 1 22.6 8.5H13z" fill="#dd4b3e" />
        <path d="M3.9 7.8l5 8.2 4.5 7.5A10.5 10.5 0 0 1 3.9 7.8z" fill="#4aa354" />
        <circle cx="13" cy="13" r="5.4" fill="#fff" />
        <circle cx="13" cy="13" r="4.2" fill="#4285ee" />
      </>
    ),
  },
  {
    name: 'Edge',
    bg: '#fff',
    art: (
      <>
        <FaEdge x="3" y="3" size="20" color="#1f6fb8" />
        <path d="M5 10c2-6 13-9 17 1 0 3-2 4-4 4 1-4-5-8-13-5z" fill="#4cc3a0" />
      </>
    ),
  },
  {
    name: 'Messages',
    badge: '12',
    bg: '#5fd860',
    art: <path d="M13 5c5.5 0 9 3.2 9 7.3s-3.5 7.4-9 7.4l-2-.2L6.5 22l1-3.7C5.200 17 4 14.9 4 12.3 4 8.200 7.5 5 13 5z" fill="#eefaee" />,
  },
  {
    name: 'Mail',
    bg: '#2f8cf0',
    art: (
      <>
        <rect x="4" y="7" width="18" height="12.5" rx="1.5" fill="#ececec" />
        <path d="M4 8l9 7 9-7M4 19l6.5-6M22 19l-6.5-6" stroke="#8d8d8d" fill="none" />
      </>
    ),
  },
  {
    name: 'Maps',
    bg: '#eef0ea',
    art: (
      <>
        <path d="M0 6a6 6 0 0 1 6-6h8L0 14z" fill="#5cc466" />
        <path d="M14 0h6a6 6 0 0 1 6 6v14z" fill="#6fca6c" />
        <path d="M17 0l9 9" stroke="#eef0ea" strokeWidth="2" />
        <path d="M0 15l8 11H6a6 6 0 0 1-6-6z" fill="#e58bb0" />
        <path d="M18 26l-4-4 8-5 4 3a6 6 0 0 1-6 6z" fill="#f2c64e" />
        <circle cx="10" cy="16.5" r="5.5" fill="#2f7cf0" />
        <path d="M10 12.5l3 7-3-1.5-3 1.5z" fill="#fff" />
      </>
    ),
  },
  {
    name: 'Photos',
    bg: '#fbfbfb',
    art: petals.map((c, i) => (
      <ellipse key={c} cx="13" cy="7.5" rx="3" ry="5" fill={c} opacity="0.85" transform={`rotate(${i * 45} 13 13)`} />
    )),
  },
  {
    name: 'Sketch',
    bg: '#ebe8ec',
    art: (
      <>
        <path d="M7.5 5.5L13 4.5l5.5 1 4 5.5L13 22.5 3.5 11z" fill="#f7a522" />
        <path d="M7.5 11h11L13 22.5z" fill="#f06a1c" />
        <path d="M7.5 11L13 4.5l5.5 6.5z" fill="#fcc940" />
      </>
    ),
  },
  { name: 'Spotify', running: true, bg: 'none', art: <FaSpotify size="26" color="#62d774" /> },
  {
    name: 'Shortcuts',
    bg: '#2c2f63',
    art: (
      <>
        <path d="M6 16l7-5 7 5-5 6q-2 1.5-4 0z" fill="#45c9b8" />
        <path d="M11 4q2-1.5 4 0l5 5.5-5 6q-2 1.5-4 0l-5-6z" fill="#e8607c" />
        <path d="M13 12l7 4-5 4q-2 1-4-1l-4-4z" fill="#6d78e8" opacity="0.7" />
      </>
    ),
  },
  {
    name: 'Game Center',
    bg: '#1b1b1f',
    art: (
      <>
        <path d="M7.5 4c3 0 4 2.5 3 5l-3 4C4 11 3 9 3.5 7z" fill="#a6d3e4" />
        <path d="M18 3.5l1.5 3.5 4-.5-2.5 3.5 1.5 3.5-4-1-3 2.5v-4L12.5 8l4-1z" fill="#5ba3ea" />
        <path d="M7 18l6-3.5 7 2-6.5 5z" fill="#53cf7f" />
      </>
    ),
  },
  {
    name: 'App Store',
    bg: '#2f86ee',
    art: (
      <path
        d="M14 5L8 16.500M12 5l7.500 14M4.500 16.500h9M17 16.500h4.500M7 19l-.8 1.500"
        stroke="#fff"
        strokeWidth="2.2"
        strokeLinecap="round"
        fill="none"
      />
    ),
  },
  {
    name: 'Stickies',
    bg: '#f3e58b',
    art: <path d="M5 7q2 3 4-1 1 4 3 0 2 2 5-1M5 13h13M5 18h8M26 18l-6 8" stroke="#b7a24c" strokeWidth="1.3" fill="none" />,
  },
  {
    name: 'Notes',
    bg: '#f3f1ec',
    art: (
      <>
        <path d="M6 0h14a6 6 0 0 1 6 6v1H0V6a6 6 0 0 1 6-6z" fill="#f7c52f" />
        <path d="M0 13h26M0 19h26" stroke="#dedbd4" />
      </>
    ),
  },
  { name: 'VS Code', running: true, bg: '#fff', art: <VscVscode x="4" y="4" size="18" color="#2c7bc9" /> },
  {
    name: 'Simulator',
    bg: '#3b8ff0',
    art: (
      <>
        <SiAppstore x="3" y="4" size="16" color="#9cc9fa" />
        <path d="M18 6l8 4-8 17-8-4z" fill="#111" />
        <path d="M15 16l6 4M20 15l-3 6" stroke="#ddd" strokeWidth="1.5" />
      </>
    ),
  },
  {
    name: 'Terminal',
    bg: '#8c9091',
    art: (
      <>
        <rect x="1.5" y="1.5" width="23" height="23" rx="5" fill="#222425" />
        <path d="M4.5 5l3 2-3 2M9 10h4" stroke="#e8e8e8" fill="none" strokeWidth="1.2" />
      </>
    ),
  },
  {
    name: 'Freeform',
    bg: '#fff',
    art: (
      <>
        <rect x="8" y="3" width="15" height="14" rx="1.5" fill="#6cc6f2" />
        <circle cx="8.5" cy="17" r="5.5" fill="#ef6b52" />
        <path d="M4 17c4-8 6-8 6-2s4-8 5-5 1 6 3 2 3-4 4-2" stroke="#1d3557" strokeWidth="1.6" fill="none" />
      </>
    ),
  },
  {
    name: 'Settings',
    bg: '#a3a6a6',
    art: (
      <>
        <circle cx="13" cy="13" r="10" fill="none" stroke="#3b3d3e" strokeWidth="2" strokeDasharray="1.5 0.6" />
        <circle cx="13" cy="13" r="8" fill="#8f9394" stroke="#2f3132" strokeWidth="2" />
        <path d="M13 13h7M13 13l-4-6M13 13l-4 6" stroke="#2a2c2d" strokeWidth="2" />
        <circle cx="13" cy="13" r="2.5" fill="#2a2c2d" />
      </>
    ),
  },
  { name: 'MongoDB', bg: '#fff', art: <SiMongodb x="3" y="3" size="20" color="#1f6b48" /> },
  { name: 'Podcasts', bg: '#9a45d6', art: <FaPodcast x="4" y="4" size="18" color="#fff" /> },
  {
    name: 'Postman',
    bg: '#f0784a',
    art: (
      <path
        d="M6 21l8-9M11 14l5-4M17 7a2.2 2.2 0 1 0 3-1"
        stroke="#fff"
        strokeWidth="2.4"
        strokeLinecap="round"
        fill="none"
      />
    ),
  },
  {
    name: 'Xcode',
    bg: '#2f7ff0',
    art: (
      <>
        <SiAppstore x="3" y="5" size="17" color="#8fc2fb" />
        <path d="M18 1l-8 25" stroke="#26282c" strokeWidth="3" />
        <path d="M12-1l9 0 6 5" stroke="#3a3d42" strokeWidth="3.5" fill="none" />
      </>
    ),
  },
  {
    name: 'YouTube Music',
    bg: '#fff',
    art: (
      <>
        <circle cx="13" cy="13" r="10.5" fill="#ef3122" />
        <circle cx="13" cy="13" r="6" fill="none" stroke="#fff" />
        <path d="M11 9.8v6.4l5.4-3.2z" fill="#fff" />
      </>
    ),
  },
  {
    name: 'iPhone Mirroring',
    bg: '#aaaab8',
    art: (
      <>
        <rect x="7.5" y="2" width="11.5" height="22" rx="2.5" fill="#1d2630" />
        <path d="M9 3.5h6c3 5 3 10-6 17z" fill="#2f7f97" />
        <path d="M13 3.5h4.500V14z" fill="#f0a184" />
      </>
    ),
  },
  { name: 'Music', running: true, bg: '#ee4358', art: <FaMusic x="5" y="5" size="16" color="#fff" /> },
  { name: 'ChatGPT', running: true, bg: '#f2f5fa', art: <SiOpenai x="3" y="3" size="20" color="#1f2022" /> },
];

const DockApp = ({ app }) => (
  <button type="button" aria-label={app.name} className="relative flex w-9 flex-col items-center">
    <svg viewBox="0 0 26 26" className="size-[26px] overflow-visible">
      <rect width="26" height="26" rx="6" fill={app.bg} />
      {app.art}
    </svg>
    {app.badge && (
      <span className="absolute -top-1 right-0 flex size-3 items-center justify-center rounded-full bg-[#e8463c] text-[8px] text-white">
        {app.badge}
      </span>
    )}
    <span className={`mt-[7px] size-[6px] rounded-full ${app.running ? 'bg-[#a79cd0]' : ''}`} />
  </button>
);

const Dock = () => (
  <footer className="relative mt-[2px] mb-[10px] flex h-[52px] items-start self-center rounded-[14px] border-2 border-[#4a3f6e] bg-linear-to-r from-[#20154a] via-[#24393f] to-[#26123f] px-0.5 pt-[7px]">
    {dockApps.map((app) => (
      <DockApp key={app.name} app={app} />
    ))}
    <span className="mx-2 h-9 w-[2px] bg-[#5c4f80]" />
    <button type="button" aria-label="Minimised window" className="flex w-9 justify-center">
      <svg viewBox="0 0 30 28" className="mt-1 h-7 w-[30px]">
        <rect width="29" height="20" fill="#191a1c" />
        <rect x="5" y="2" width="6" height="6" fill="#e2e2e2" />
        <path d="M10 8h7" stroke="#c8413f" strokeWidth="1.5" />
        <rect x="19" y="15" width="10" height="10" rx="2" fill="#ee4358" />
        <FaMusic x="21" y="17" size="6" color="#fff" />
      </svg>
    </button>
    <button type="button" aria-label="Trash" className="flex w-9 justify-center">
      <svg viewBox="0 0 24 30" className="-mt-0.5 h-[30px] w-6">
        <path d="M1 4h22l-3 24q-8 3-16 0z" fill="#85888a" />
        <path d="M6 5l2 22M12 5v23M18 5l-2 22" stroke="#5f6264" />
        <path d="M1 4l4-3 3 2 4-3 4 3 4-2 3 3-4 3H5z" fill="#dfe2e3" />
        <path d="M6 3l2 2M14 2l-1 3M18 4l-2 1" stroke="#4a5a70" strokeWidth="1.5" />
      </svg>
    </button>
  </footer>
);

const App = () => (
  <div className="relative flex min-h-screen flex-col bg-[#0d0426] font-[Inter,'Liberation_Sans',sans-serif]">
    <Wallpaper />
    <MenuBar />
    <div className="relative mt-[2px] flex flex-1 flex-col overflow-hidden rounded-[22px] border-2 border-[#4b4e50] bg-[#0e1116]">
      <TabStrip />
      <Toolbar />
      <SiteHeader />
      <div className="flex flex-1 flex-col pt-8">
        <RepoTitle />
        <RepoTabs />
        <main className="mx-auto flex w-full max-w-[2432px] gap-12 pt-12">
          <div className="min-w-0 flex-1">
            <FileBar />
            <FileList />
          </div>
          <Sidebar />
        </main>
        <SiteFooter />
      </div>
    </div>
    <Dock />
  </div>
);

export default App;
